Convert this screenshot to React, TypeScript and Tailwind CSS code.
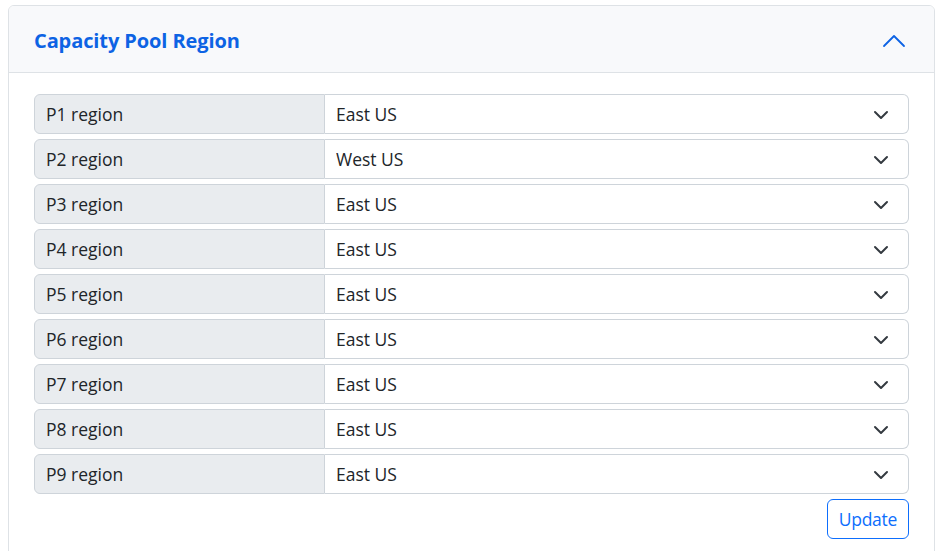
import { useState } from "react";

const REGIONS = ["East US", "West US", "East US", "East US", "East US", "East US", "East US", "East US", "East US"];

function ChevronDown() {
  return (
    <svg width="16" height="16" viewBox="0 0 16 16" fill="none" stroke="#343a40" strokeWidth="2" strokeLinecap="round" strokeLinejoin="round">
      <path d="M2 5l6 6 6-6" />
    </svg>
  );
}

export default function App() {
  const [vals, setVals] = useState(REGIONS);
  return (
    <div className="w-[941px] h-[551px] overflow-hidden bg-white pl-[8px] pt-[5px]" style={{ fontFamily: '"Open Sans", "Noto Sans", sans-serif' }}>
      <div className="w-[927px] h-[560px] border border-[#dee2e6] rounded-[6px] overflow-hidden">
        <div className="h-[67px] bg-[#f8f9fb] border-b border-[#dee2e6] flex items-center justify-between pl-[25px] pr-[28px] pt-[3px]">
          <span className="text-[20px] font-bold text-[#0d63e4] tracking-[-0.1px]">Capacity Pool Region</span>
          <svg width="24" height="14" viewBox="0 0 24 14" fill="none" stroke="#0d63e4" strokeWidth="1.8" strokeLinecap="round" strokeLinejoin="round">
            <path d="M2 12L12 2l10 10" />
          </svg>
        </div>
        <div className="pl-[25px] pr-[25px] pt-[21px] flex flex-col gap-[5px]">
          {vals.map((v, i) => (
            <div key={i} className="flex h-[40px] text-[17.5px] text-[#212529]">
              <div className="w-[291px] shrink-0 bg-[#e9ecef] border border-[#ced4da] rounded-l-[6px] flex items-center pl-[11px]">
                P{i + 1} region
              </div>
              <label className="relative flex-1 border border-l-0 border-[#ced4da] rounded-r-[6px] bg-white flex items-center">
                <select
                  className="appearance-none w-full h-full bg-transparent pl-[11px] pr-10 outline-none"
                  value={v}
                  onChange={(e) => setVals(vals.map((x, j) => (j === i ? e.target.value : x)))}
                >
                  <option>East US</option>
                  <option>West US</option>
                </select>
                <span className="pointer-events-none absolute right-[19px] top-[12px]">
                  <ChevronDown />
                </span>
              </label>
            </div>
          ))}
          <div className="flex justify-end">
            <button className="h-[40px] px-[11px] border border-[#0d6efd] rounded-[6px] text-[#0d6efd] text-[17.5px] tracking-[-0.3px]">Update</button>
          </div>
        </div>
      </div>
    </div>
  );
}
